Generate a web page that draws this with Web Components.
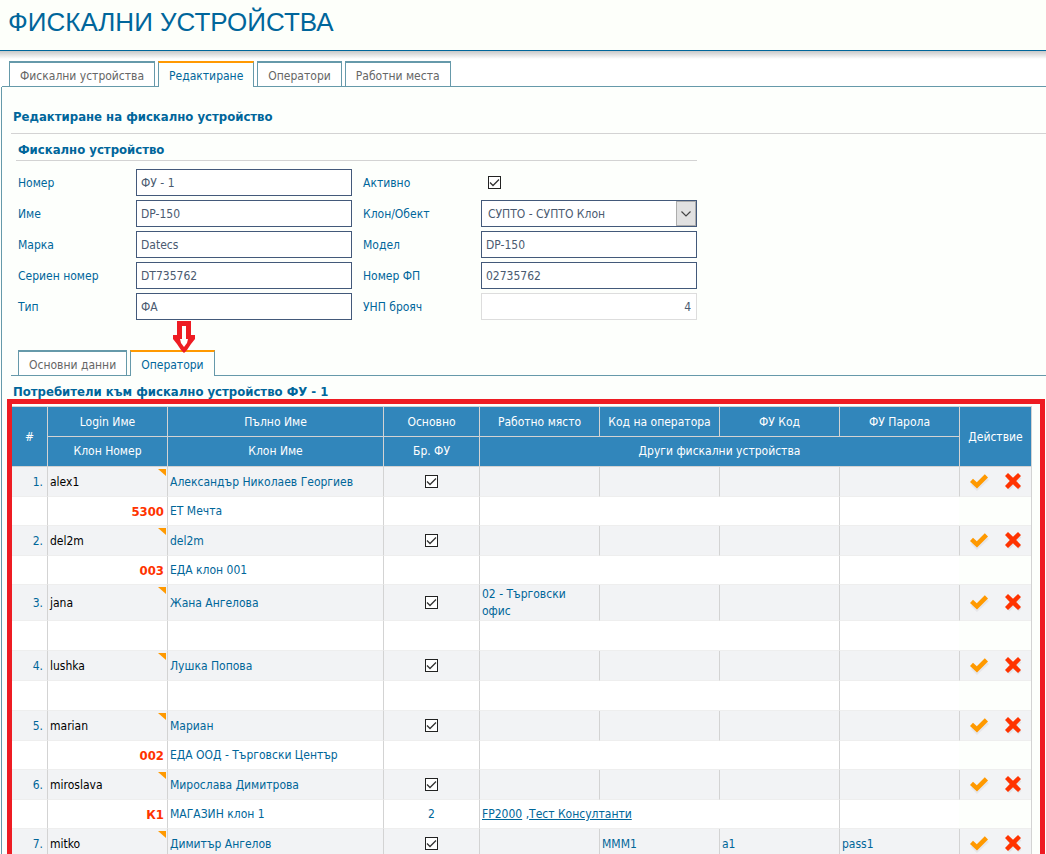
<!DOCTYPE html>
<html lang="bg">
<head>
<meta charset="utf-8">
<title>Фискални устройства</title>
<style>
  html { background: #fdfffc; }
  body {
    margin: 0;
    color: #069;
    font: 12px/16px "DejaVu Sans Condensed", Tahoma, "Noto Sans", sans-serif;
    --line: #d3d3d3;
    --teal: #6699aa;
    --accent: #f90;
    --blue: #00669b;
  }
</style>
</head>
<body>
<fiscal-page></fiscal-page>

<script>
const define = (name, html, setup) => {
  const template = document.createElement('template');
  template.innerHTML = html;
  customElements.define(name, class extends HTMLElement {
    connectedCallback() {
      if (this.shadowRoot) return;
      const root = this.attachShadow({ mode: 'open' });
      root.append(template.content.cloneNode(true));
      if (setup) setup(this, root);
    }
  });
};

const TICK = `url("data:image/svg+xml,%3Csvg xmlns='http://www.w3.org/2000/svg' viewBox='0 0 13 13'%3E%3Cpath d='M2 6.5 5 9.5 11 3.5' fill='none' stroke='%23333' stroke-width='1.3'/%3E%3C/svg%3E")`;
const CHECKBOX_CSS = `
  input[type=checkbox] {
    appearance: none; display: block; box-sizing: border-box; margin: 0;
    width: 13px; height: 13px; border: 1px solid #222;
    background: #fff ${TICK} center / 13px 13px no-repeat;
  }
  input[type=checkbox]:not(:checked) { background-image: none; }`;

/* Page title bar */
define('page-header', `
  <style>
    :host { display: block; }
    header { height: 44px; padding: 6px 8px 0; border-bottom: 1px solid var(--blue); background: #fdfffa; }
    h1 { margin: 0; font: 26px/32px "Liberation Sans", Arial, sans-serif; color: var(--blue); white-space: nowrap; }
    div { height: 10px; background: linear-gradient(#c8c8c8, #fff 80%); }
  </style>
  <header><h1><slot></slot></h1></header><div></div>`);

/* Strip of tabs; each tab is a slotted tab-item */
define('tab-strip', `
  <style>
    :host { display: block; }
    nav { display: flex; gap: 2px; padding-left: 7px; height: 25px; border-bottom: 1px solid var(--teal); }
  </style>
  <nav><slot></slot></nav>`);

define('tab-item', `
  <style>
    :host { display: block; }
    a {
      display: block; box-sizing: border-box; height: 25px; padding: 4px 10px 0;
      border: solid var(--teal); border-width: 2px 1px 0 1px;
      background: #fff; color: #666; line-height: 18px; text-decoration: none; white-space: nowrap;
    }
    :host([active]) a { height: 26px; border-top-color: var(--accent); background: #fdfffc; color: var(--blue); }
    :host { padding-right: 1px; }
  </style>
  <a href="#"><slot></slot></a>`);

/* Label with its control: text, number, choice or tick box */
define('form-field', `
  <style>
    :host { display: grid; grid-template-columns: 118px 216px; align-items: center; height: 27px; }
    label { color: var(--blue); }
    input.text, select {
      box-sizing: border-box; width: 100%; height: 27px; margin: 0; padding: 1px 4px 0;
      border: 1px solid #43597a; border-radius: 0; background: #fff;
      font: inherit; color: #4a5a70;
    }
    input.text:disabled { border-color: #ddd; text-align: right; padding-right: 5px; }
    select { appearance: none; padding: 1px 24px 0 6px; }
    .choice { display: grid; grid-template-columns: 1fr 20px; }
    .choice select { grid-area: 1 / 1 / 2 / 3; }
    .choice svg { grid-area: 1 / 2; align-self: center; width: 20px; height: 25px; margin-left: -1px; background: #e1e1e1; outline: 1px solid #adadad; outline-offset: -1px; pointer-events: none; }
    .tick { padding-left: 7px; }
    ${CHECKBOX_CSS}
  </style>
  <label for="control"></label>`, (host, root) => {
  root.querySelector('label').textContent = host.getAttribute('label');
  const value = host.getAttribute('value');
  const kind = host.getAttribute('kind');
  const html = kind === 'check' ? '<div class="tick"><input type="checkbox" id="control" checked></div>'
    : kind === 'choice' ? `<div class="choice"><select id="control"><option>${value}</option></select>
        <svg viewBox="0 0 20 24"><path d="M5.500 10l4.500 4.500 4.500-4.500" fill="none" stroke="#444" stroke-width="1.200"/></svg></div>`
    : `<input class="text" type="text" id="control" value="${value}"${kind === 'locked' ? ' disabled' : ''}>`;
  root.querySelector('label').insertAdjacentHTML('afterend', html);
});

define('device-form', `
  <style>
    :host { display: block; }
    h3 { box-sizing: border-box; width: 681px; max-width: 100%; height: 27px; margin: 0 0 8px 5px; padding: 8px 2px 0; border-bottom: 1px solid var(--line); font-size: 13px; line-height: 16px; color: var(--blue); }
    form { display: grid; grid-template-columns: max-content max-content; gap: 4px 11px; padding-left: 7px; }
  </style>
  <h3>Фискално устройство</h3>
  <form>
    <form-field label="Номер" value="ФУ - 1"></form-field>
    <form-field label="Активно" kind="check"></form-field>
    <form-field label="Име" value="DP-150"></form-field>
    <form-field label="Клон/Обект" kind="choice" value="СУПТО - СУПТО Клон"></form-field>
    <form-field label="Марка" value="Datecs"></form-field>
    <form-field label="Модел" value="DP-150"></form-field>
    <form-field label="Сериен номер" value="DT735762"></form-field>
    <form-field label="Номер ФП" value="02735762"></form-field>
    <form-field label="Тип" value="ФА"></form-field>
    <form-field label="УНП брояч" kind="locked" value="4"></form-field>
  </form>`);

define('row-actions', `
  <style>
    :host { display: flex; justify-content: center; gap: 14px; }
    button { display: block; padding: 0; border: 0; background: none; width: 20px; height: 20px; }
    svg { display: block; width: 20px; height: 20px; }
  </style>
  <button type="button" aria-label="Запази"><svg viewBox="0 0 20 20">
    <path d="M3 12l5 5 11-10" fill="none" stroke="#e6e6ea" stroke-width="3"/>
    <path d="M1 10L4 6.800 7.800 10.200 15.800 2.200 19 5.500 8 16.500z" fill="#f90"/></svg></button>
  <button type="button" aria-label="Изтрий"><svg viewBox="0 0 20 20">
    <path d="M5 5l12 12M17 5L5 17" stroke="#e4e4e8" stroke-width="4"/>
    <path d="M2 4L5 1 10 5.800 15 1 18 4 13.200 9 18 14 15 17 10 12.200 5 17 2 14 6.800 9z" fill="#f30"/></svg></button>`);

const operators = [
  { login: 'alex1', name: 'Александър Николаев Георгиев', code: '5300', branch: 'ЕТ Мечта' },
  { login: 'del2m', name: 'del2m', code: '003', branch: 'ЕДА клон 001' },
  { login: 'jana', name: 'Жана Ангелова', place: '02 - Търговски офис' },
  { login: 'lushka', name: 'Лушка Попова' },
  { login: 'marian', name: 'Мариан', code: '002', branch: 'ЕДА ООД - Търговски Център' },
  { login: 'miroslava', name: 'Мирослава Димитрова', code: 'К1', branch: 'МАГАЗИН клон 1', count: '2',
    others: '<a href="#">FP2000</a> ,<a href="#">Тест Консултанти</a>' },
  { login: 'mitko', name: 'Димитър Ангелов', operator: 'МММ1', fuCode: 'a1', password: 'pass1' }
];

define('operators-table', `
  <style>
    :host { display: block; border: 5px solid #ee1c23; padding: 2px 8px 0 0; }
    table { width: 100%; table-layout: fixed; border-collapse: separate; border-spacing: 0; border-right: 1px solid var(--line); border-top: 1px solid var(--line); box-sizing: border-box; }
    th, td { box-sizing: border-box; padding: 1px 2px 0; border-left: 1px solid var(--line); line-height: 17px; }
    th { height: 30px; border-bottom: 1px solid var(--line); background: #3186bb; color: #fff; font-weight: normal; white-space: nowrap; padding: 0; }
    tr:first-child th { padding-top: 2px; }
    .first { border-left: 0; }
    td { border-bottom: 1px solid #eee; text-align: left; }
    .main td { height: 30px; background: #f2f3f5; }
    .sub td { height: 30px; background: #fff; }
    .sub.filled td { height: 29px; }
    .main.long td { height: 36px; }
    td.num { text-align: right; padding-right: 4px; }
    .login { position: relative; color: #000; }
    .login::after { content: ""; position: absolute; top: 2px; right: 1px; width: 8px; height: 7px; background: var(--accent); clip-path: polygon(0 0, 100% 0, 100% 100%); }
    td.code { text-align: right; padding-right: 3px; color: #f30; font-size: 13px; font-weight: bold; }
    td.mid { text-align: center; }
    .main td.mid, .main td.act { padding-top: 0; }
    .sub td.blank { border-left: 0; background: #fdfffc; }
    a { color: inherit; }
    ${CHECKBOX_CSS}
    td input[type=checkbox] { margin: 0 auto; }
  </style>
  <table>
    <colgroup>
      <col style="width:35px"><col style="width:120px"><col><col style="width:96px"><col style="width:120px">
      <col style="width:120px"><col style="width:120px"><col style="width:120px"><col style="width:72px">
    </colgroup>
    <thead>
      <tr><th rowspan="2" class="first">#</th><th>Login Име</th><th>Пълно Име</th><th>Основно</th><th>Работно място</th>
        <th>Код на оператора</th><th>ФУ Код</th><th>ФУ Парола</th><th rowspan="2">Действие</th></tr>
      <tr><th>Клон Номер</th><th>Клон Име</th><th>Бр. ФУ</th><th colspan="4">Други фискални устройства</th></tr>
    </thead>
    <tbody></tbody>
  </table>`, (host, root) => {
  root.querySelector('tbody').innerHTML = operators.map((o, i) => `
    <tr class="main${o.place ? ' long' : ''}">
      <td class="num first">${i + 1}.</td><td class="login">${o.login}</td><td>${o.name}</td>
      <td class="mid"><input type="checkbox" checked aria-label="Основно"></td>
      <td>${o.place || ''}</td><td>${o.operator || ''}</td><td>${o.fuCode || ''}</td><td>${o.password || ''}</td>
      <td class="act"><row-actions></row-actions></td>
    </tr>
    <tr class="sub${o.code ? ' filled' : ''}">
      <td class="first"></td><td class="code">${o.code || ''}</td><td>${o.branch || ''}</td>
      <td class="mid">${o.count || ''}</td><td colspan="3">${o.others || ''}</td><td></td><td class="blank"></td>
    </tr>`).join('');
});

define('fiscal-page', `
  <style>
    :host { display: block; overflow-x: clip; }
    .top { padding-left: 2px; background: #fff; }
    main { margin-left: 1px; border-left: 1px solid var(--teal); background: #fdfffc; }
    h2 { margin: 0 0 0 9px; padding: 22px 2px 0; height: 24px; border-bottom: 1px solid var(--line); font-size: 13px; line-height: 16px; color: var(--blue); }
    device-form { margin-left: 9px; }
    .inner { position: relative; margin: 30px 0 0 9px; }
    .pointer { position: absolute; left: 162px; top: -29px; width: 22px; height: 32px; }
    h4 { margin: 0 0 0 11px; padding-top: 9px; font-size: 13px; line-height: 14px; color: var(--blue); }
    operators-table { margin: 0 1px 0 5px; }
  </style>
  <page-header>ФИСКАЛНИ УСТРОЙСТВА</page-header>
  <div class="top"><tab-strip>
    <tab-item>Фискални устройства</tab-item><tab-item active>Редактиране</tab-item>
    <tab-item>Оператори</tab-item><tab-item>Работни места</tab-item>
  </tab-strip></div>
  <main>
    <h2>Редактиране на фискално устройство</h2>
    <device-form></device-form>
    <div class="inner">
      <tab-strip><tab-item>Основни данни</tab-item><tab-item active>Оператори</tab-item></tab-strip>
      <svg class="pointer" viewBox="0 0 22 32">
        <path d="M4 0h14v14h4v4l-4 5-4 6-3 3-3-3-4-6-4-5v-4h4z" fill="#ee1c23"/>
        <path d="M9 5h4v13h2l-1 4-3 4-3-4-1-4h2z" fill="#fff"/></svg>
    </div>
    <h4>Потребители към фискално устройство ФУ - 1</h4>
    <operators-table></operators-table>
  </main>`);
</script>
</body>
</html>
